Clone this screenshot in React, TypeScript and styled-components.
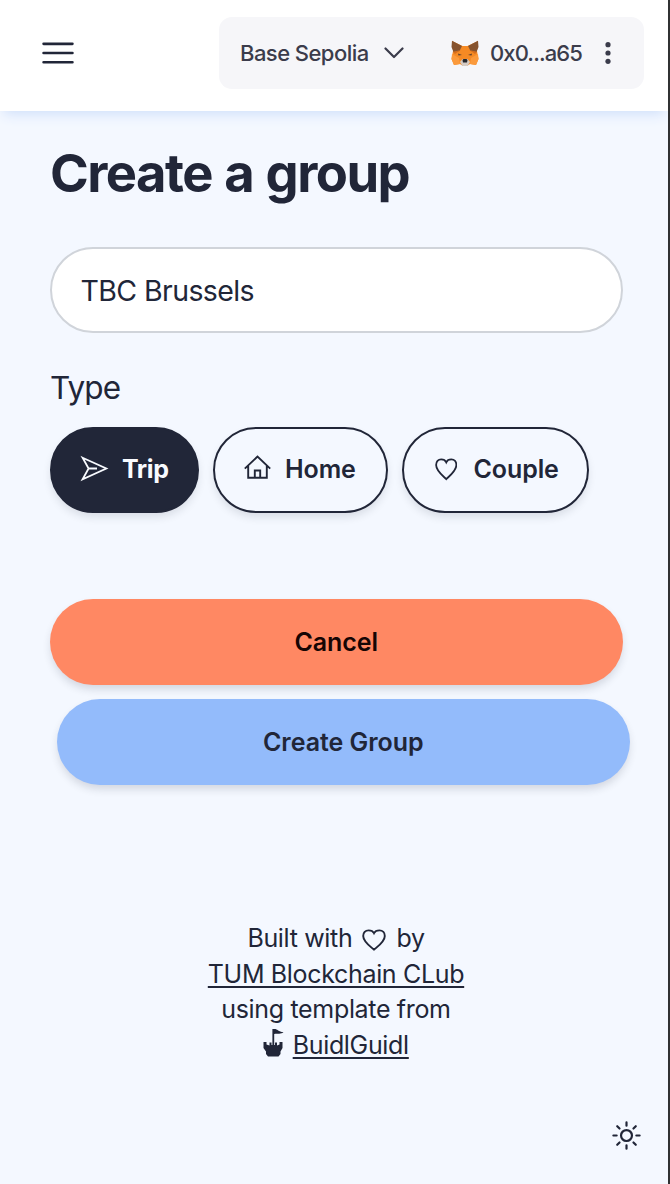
import React from "react";
import styled, { createGlobalStyle } from "styled-components";
import { HiOutlineBars3, HiOutlineSun } from "react-icons/hi2";

const GlobalStyle = createGlobalStyle`
  *, *::before, *::after { box-sizing: border-box; }
  body { margin: 0; background: #f4f8ff; color: #212638; font-family: Inter, "Liberation Sans", sans-serif; }
  svg { display: block; flex: none; }
`;

const Page = styled.div`
  width: 670px;
  height: 1184px;
  display: flex;
  flex-direction: column;
  background: #f4f8ff;
  border-right: 2px solid #303132;
  overflow: hidden;
`;

const Header = styled.header`
  height: 111px;
  flex: none;
  display: flex;
  align-items: center;
  justify-content: space-between;
  padding: 0 24px 4.5px 37px;
  background: #fff;
  box-shadow: 0 7px 12px -4px #cfdffa;
`;

const IconButton = styled.button`
  display: flex;
  padding: 0;
  border: 0;
  background: none;
  color: inherit;
`;

const WalletBar = styled.div`
  width: 425px;
  height: 72px;
  display: flex;
  align-items: center;
  padding: 0 33px 0 21px;
  border-radius: 13px;
  background: #f6f6f9;
  color: #3b3c4b;
`;

const WalletText = styled.span<{ $spacing: number }>`
  font-size: 22px;
  font-weight: 500;
  line-height: 28px;
  letter-spacing: ${(p) => p.$spacing}px;
  white-space: nowrap;
`;

const Network = styled.div`
  display: flex;
  align-items: center;
  gap: 15px;
  width: 211px;
`;

const Account = styled.div`
  flex: 1;
  display: flex;
  align-items: center;
  gap: 11px;
`;

const Dots = styled.svg`
  margin-left: auto;
`;

const Main = styled.main`
  flex: 1;
  display: flex;
  flex-direction: column;
  align-items: flex-start;
  padding: 30px 38px 0 50px;
`;

const Title = styled.h1`
  margin: 0;
  font-size: 52.5px;
  line-height: 64px;
  font-weight: 700;
  letter-spacing: -1.55px;
  word-spacing: 1.5px;
  white-space: nowrap;
`;

const NameInput = styled.input`
  width: 572.5px;
  height: 86px;
  margin-top: 42px;
  padding: 0 28.5px;
  border: 2px solid #d0d4da;
  border-radius: 43px;
  background: #fff;
  color: #212638;
  font: 400 28.5px/40px Inter, sans-serif;
  letter-spacing: -0.6px;
  outline: none;
`;

const Label = styled.div`
  margin-top: 33px;
  font-size: 31.5px;
  line-height: 44px;
  letter-spacing: -0.9px;
`;

const TypeRow = styled.div`
  display: flex;
  gap: 14px;
  margin-top: 16.5px;
`;

const Pill = styled.button<{ $active?: boolean; $width: number }>`
  width: ${(p) => p.$width}px;
  height: 86px;
  display: flex;
  align-items: center;
  gap: 13px;
  padding: 0 28px 2px;
  border: 2px solid #212638;
  border-radius: 43px;
  background: ${(p) => (p.$active ? "#212638" : "transparent")};
  color: ${(p) => (p.$active ? "#f9fbff" : "#212638")};
  font: ${(p) => (p.$active ? 700 : 600)} 25px/30px Inter, sans-serif;
  letter-spacing: ${(p) => (p.$active ? -0.4 : -0.1)}px;
  white-space: nowrap;
  box-shadow: 0 5px 9px -1px rgba(33, 38, 56, 0.13);
`;

const Actions = styled.div`
  display: flex;
  flex-direction: column;
  gap: 14px;
  margin-top: 86.500px;
`;

const ActionButton = styled.button<{ $bg: string; $ink: string; $indent?: number }>`
  width: 572.5px;
  height: 86px;
  margin-left: ${(p) => p.$indent ?? 0}px;
  border: 0;
  border-radius: 43px;
  background: ${(p) => p.$bg};
  color: ${(p) => p.$ink};
  font: 600 25px/30px Inter, sans-serif;
  letter-spacing: -0.05px;
  box-shadow: 0 5px 9px -1px rgba(33, 38, 56, 0.16);
`;

const Footer = styled.footer`
  width: 572px;
  display: flex;
  flex-direction: column;
  align-items: center;
  margin-top: 136px;
  font-size: 25px;
  line-height: 35.6px;
  letter-spacing: -0.33px;
`;

const FooterLine = styled.div`
  display: flex;
  align-items: center;
  gap: 7.5px;
  height: 35.6px;
  white-space: nowrap;
`;

const FooterLink = styled.a`
  color: inherit;
  text-decoration: underline;
  text-decoration-thickness: 2px;
  text-underline-offset: 3px;
  text-decoration-skip-ink: none;
`;

const CastleBox = styled.span`
  display: flex;
  padding-bottom: 6px;
`;

const ThemeBar = styled.div`
  display: flex;
  justify-content: flex-end;
  padding: 0 24.5px 31.5px 0;
`;

const LineIcon = styled.svg`
  fill: none;
  stroke: currentColor;
  stroke-width: 1.9;
  stroke-linejoin: miter;
`;

const PlaneIcon = () => (
  <LineIcon width="29" height="29" viewBox="0 0 29 29">
    <path d="M2.600 3.800 L26.300 14.500 L2.600 25.200 L8.600 14.500Z M8.600 14.500 H17" strokeWidth="1.8" />
  </LineIcon>
);

const HomeIcon = () => (
  <LineIcon width="29" height="29" viewBox="0 0 29 29">
    <path d="M1.800 14.600 L14.500 2.600 L27.200 14.600 M5.200 12 V23.800 H23.800 V12 M11.800 23.800 V16.500 H17.200 V23.800" />
  </LineIcon>
);

const HeartIcon = ({ width, height }: { width: number; height: number }) => (
  <LineIcon width={width} height={height} viewBox="0 0 24 23" preserveAspectRatio="none">
    <path d="M12 21.600 C8 17.800 1.200 13.200 1.200 7.200 C1.200 3.800 3.300 1.400 6.600 1.400 C9.300 1.400 11.200 2.700 12 4.400 C12.800 2.700 14.700 1.400 17.400 1.400 C20.700 1.400 22.800 3.800 22.800 7.200 C22.800 13.200 16 17.800 12 21.600Z" />
  </LineIcon>
);

const HeartSlot = styled.span`
  width: 29px;
  display: flex;
  justify-content: center;
  padding-top: 2px;
`;

const Fox = () => (
  <svg width="28" height="27" viewBox="0 0 28 27">
    <path d="M1 1 L11.500 6 H16.500 L27 1 L26 11 L27.500 19 L25 25 L19 24 L16 26 H12 L9 24 L3 25 L0.500 19 L2 11Z" fill="#f68a24" />
    <path d="M1 14 L8 18 L9 24 L3 25 L0.500 19Z M27 14 L20 18 L19 24 L25 25 L27.500 19Z" fill="#fb9a3c" />
    <path d="M1 0.800 L11 6 L8.500 11 L2.500 12 L0.500 7Z M27 0.800 L17 6 L19.500 11 L25.500 12 L27.500 7Z" fill="#86532e" />
    <path d="M2 12 L9.500 10 L4 14Z M26 12 L18.500 10 L24 14Z" fill="#d66e1d" />
    <path d="M7 13.500 L11 15 L7.500 15.500Z M21 13.500 L17 15 L20.500 15.500Z" fill="#5b402f" />
    <path d="M9 22 L11.500 19 H16.500 L19 22 L16.500 26 H11.500Z" fill="#d5cbc4" />
    <path d="M11.500 20 L12.500 19 H15.500 L16.500 20 L16 22.500 H12Z" fill="#27272b" />
  </svg>
);

const Castle = () => (
  <svg width="22" height="30" viewBox="0 0 22 30">
    <path d="M9.400 17 V1 H11 C14 0.500 15 3.500 20.500 4.200 C18 6.500 14.500 5 11.200 6 V17Z" fill="currentColor" />
    <path d="M0.500 14 H3.500 V16.500 L6.500 17.500 V14.500 H8.500 V17 H12 V14.500 H14 V17.500 L16.500 16.500 V14 H19.500 V20 L17.500 23.500 V26 L15.500 28.500 H5 L3 26 V23.500 L0.500 20Z" fill="currentColor" />
  </svg>
);

export default function App() {
  return (
    <>
      <GlobalStyle />
      <Page>
        <Header>
          <IconButton aria-label="Menu">
            <HiOutlineBars3 size={42} />
          </IconButton>
          <WalletBar>
            <Network>
              <WalletText $spacing={-0.55}>Base Sepolia</WalletText>
              <svg width="20" height="12" viewBox="0 0 20 12" fill="none" stroke="currentColor" strokeWidth="2.2" strokeLinecap="round" strokeLinejoin="round">
                <path d="M1.500 1.500 L10 10 L18.500 1.500" />
              </svg>
            </Network>
            <Account>
              <Fox />
              <WalletText $spacing={-0.9}>0x0...a65</WalletText>
              <Dots width="6" height="22" viewBox="0 0 6 22" fill="currentColor">
                <circle cx="3" cy="2.700" r="2.600" />
                <circle cx="3" cy="11" r="2.600" />
                <circle cx="3" cy="19.300" r="2.600" />
              </Dots>
            </Account>
          </WalletBar>
        </Header>
        <Main>
          <Title>Create a group</Title>
          <NameInput defaultValue="TBC Brussels" />
          <Label>Type</Label>
          <TypeRow>
            <Pill $active $width={149}>
              <PlaneIcon />
              Trip
            </Pill>
            <Pill $width={174.5}>
              <HomeIcon />
              Home
            </Pill>
            <Pill $width={187.5}>
              <HeartSlot>
                <HeartIcon width={22.5} height={22.5} />
              </HeartSlot>
              Couple
            </Pill>
          </TypeRow>
          <Actions>
            <ActionButton $bg="#ff8863" $ink="#160504">Cancel</ActionButton>
            <ActionButton $bg="#93bbfb" $ink="#212638" $indent={7}>Create Group</ActionButton>
          </Actions>
          <Footer>
            <FooterLine>
              Built with
              <HeartSlot>
                <HeartIcon width={24} height={22} />
              </HeartSlot>
              by
            </FooterLine>
            <FooterLine>
              <FooterLink>TUM Blockchain CLub</FooterLink>
            </FooterLine>
            <FooterLine>using template from</FooterLine>
            <FooterLine>
              <CastleBox>
                <Castle />
              </CastleBox>
              <FooterLink>BuidlGuidl</FooterLink>
            </FooterLine>
          </Footer>
        </Main>
        <ThemeBar>
          <IconButton aria-label="Toggle theme">
            <HiOutlineSun size={35} />
          </IconButton>
        </ThemeBar>
      </Page>
    </>
  );
}
